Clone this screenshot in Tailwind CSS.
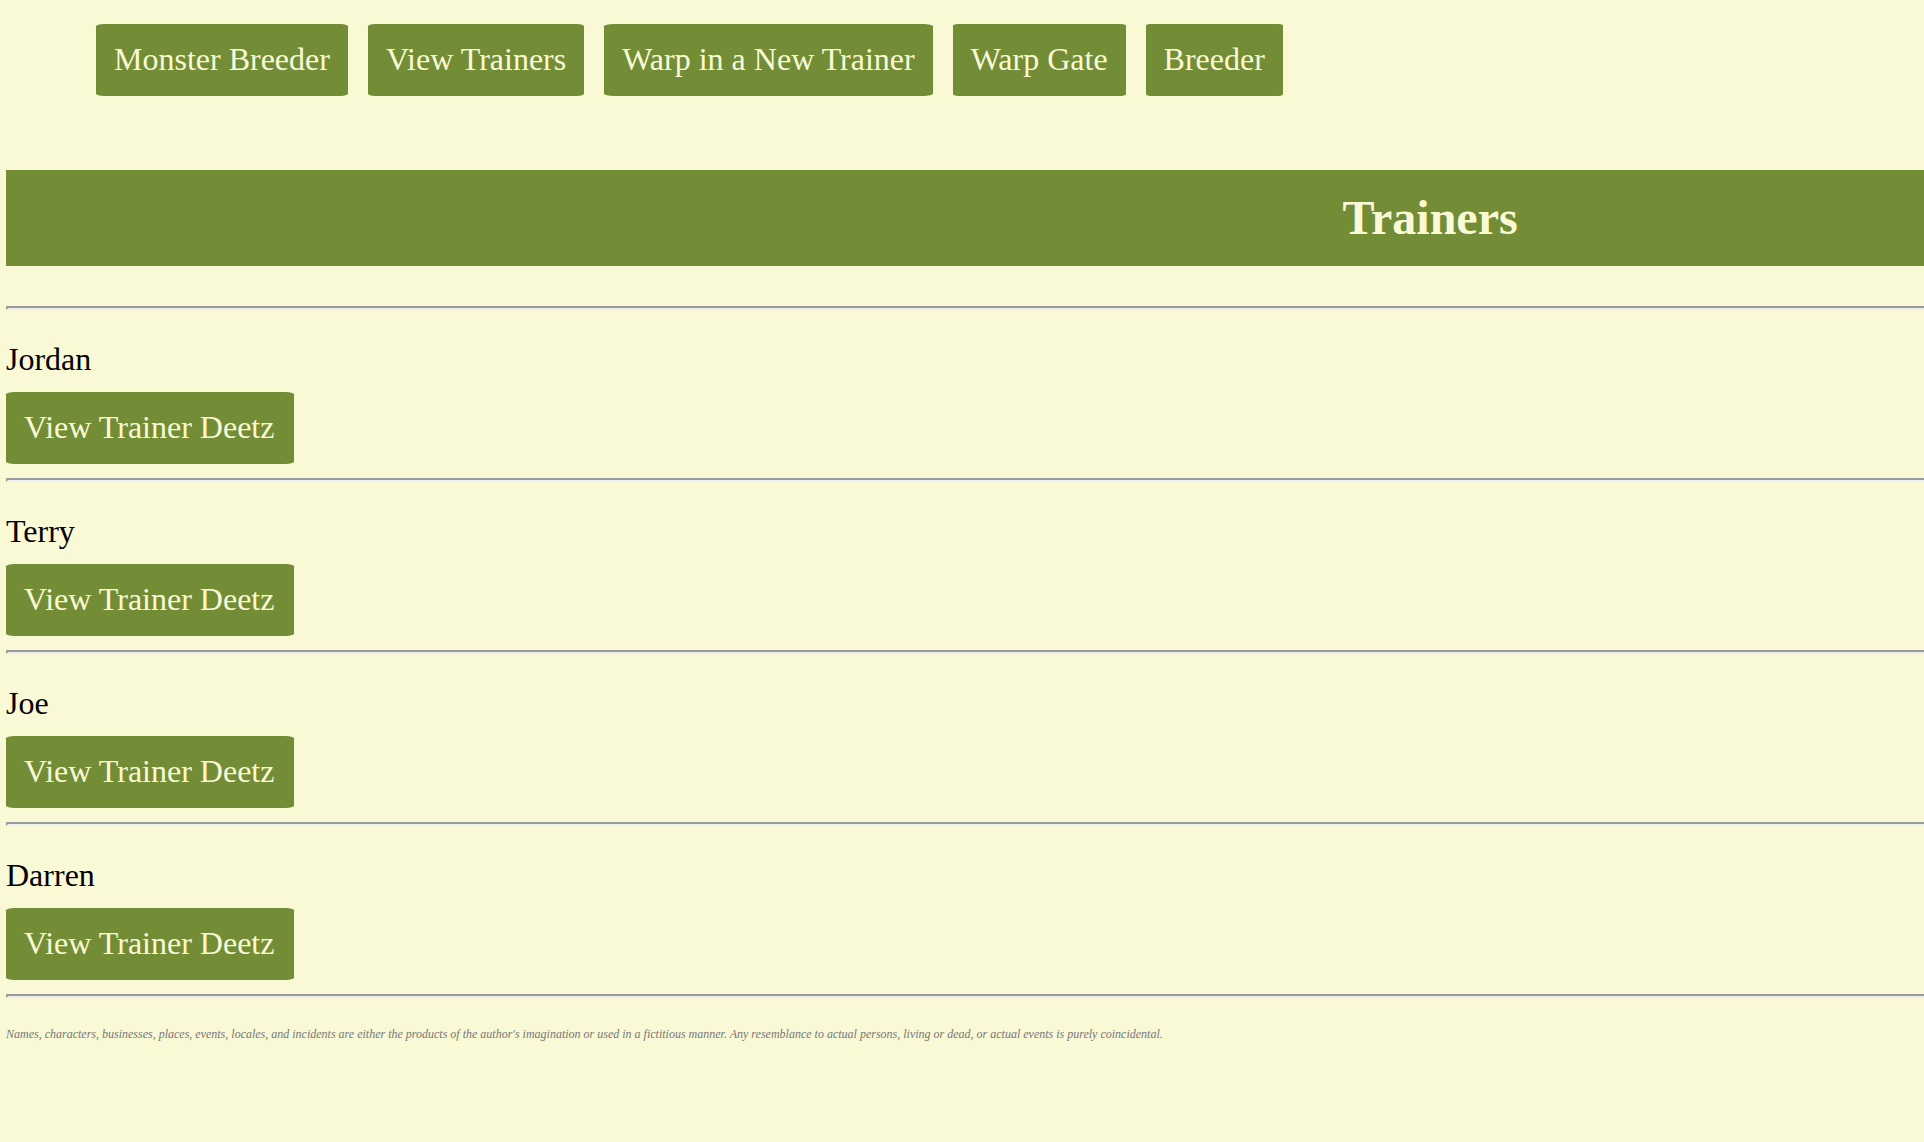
<!DOCTYPE html>
<html lang="en">
<head>
<meta charset="utf-8">
<meta name="viewport" content="width=device-width, initial-scale=1">
<title>Trainers</title>
<script src="https://cdn.jsdelivr.net/npm/@tailwindcss/browser@4"></script>
</head>
<body class="min-h-screen bg-[#f9f9d6] font-['Liberation_Serif',serif] text-[32px] leading-9 text-black">
<nav class="pt-6 pl-24">
<ul class="flex flex-wrap gap-5">
<li><a href="#" class="block rounded-[3%] bg-[#738d36] px-[18px] pt-[17px] pb-[19px] text-[#f9f9d6]">Monster Breeder</a></li>
<li><a href="#" class="block rounded-[3%] bg-[#738d36] px-[18px] pt-[17px] pb-[19px] text-[#f9f9d6]">View Trainers</a></li>
<li><a href="#" class="block rounded-[3%] bg-[#738d36] px-[18px] pt-[17px] pb-[19px] text-[#f9f9d6]">Warp in a New Trainer</a></li>
<li><a href="#" class="block rounded-[3%] bg-[#738d36] px-[18px] pt-[17px] pb-[19px] text-[#f9f9d6]">Warp Gate</a></li>
<li><a href="#" class="block rounded-[3%] bg-[#738d36] px-[18px] pt-[17px] pb-[19px] text-[#f9f9d6]">Breeder</a></li>
</ul>
</nav>
<main class="pt-[74px] pl-[6px]">
<h1 class="mb-10 bg-[#738d36] py-5 pl-[48.5%] text-center text-[48px] leading-14 font-bold text-[#f9f9d6]">Trainers</h1>
<hr class="h-1 border-2 border-r-0 border-t-[#9a9a9a] border-b-[#eeeeee] border-l-[#9a9a9a]">
<section class="pt-[31px] pb-[14px]">
<p class="mb-[15px]">Jordan</p>
<a href="#" class="block w-fit rounded-[3%] bg-[#738d36] pt-[17px] pr-5 pb-[19px] pl-[18px] text-[#f9f9d6]">View Trainer Deetz</a>
</section>
<hr class="h-1 border-2 border-r-0 border-t-[#9a9a9a] border-b-[#eeeeee] border-l-[#9a9a9a]">
<section class="pt-[31px] pb-[14px]">
<p class="mb-[15px]">Terry</p>
<a href="#" class="block w-fit rounded-[3%] bg-[#738d36] pt-[17px] pr-5 pb-[19px] pl-[18px] text-[#f9f9d6]">View Trainer Deetz</a>
</section>
<hr class="h-1 border-2 border-r-0 border-t-[#9a9a9a] border-b-[#eeeeee] border-l-[#9a9a9a]">
<section class="pt-[31px] pb-[14px]">
<p class="mb-[15px]">Joe</p>
<a href="#" class="block w-fit rounded-[3%] bg-[#738d36] pt-[17px] pr-5 pb-[19px] pl-[18px] text-[#f9f9d6]">View Trainer Deetz</a>
</section>
<hr class="h-1 border-2 border-r-0 border-t-[#9a9a9a] border-b-[#eeeeee] border-l-[#9a9a9a]">
<section class="pt-[31px] pb-[14px]">
<p class="mb-[15px]">Darren</p>
<a href="#" class="block w-fit rounded-[3%] bg-[#738d36] pt-[17px] pr-5 pb-[19px] pl-[18px] text-[#f9f9d6]">View Trainer Deetz</a>
</section>
<hr class="h-1 border-2 border-r-0 border-t-[#9a9a9a] border-b-[#eeeeee] border-l-[#9a9a9a]">
</main>
<footer class="pt-7 pl-[6px] text-xs leading-4 text-[#777777] italic">
<p>Names, characters, businesses, places, events, locales, and incidents are either the products of the author's imagination or used in a fictitious manner. Any resemblance to actual persons, living or dead, or actual events is purely coincidental.</p>
</footer>
</body>
</html>
